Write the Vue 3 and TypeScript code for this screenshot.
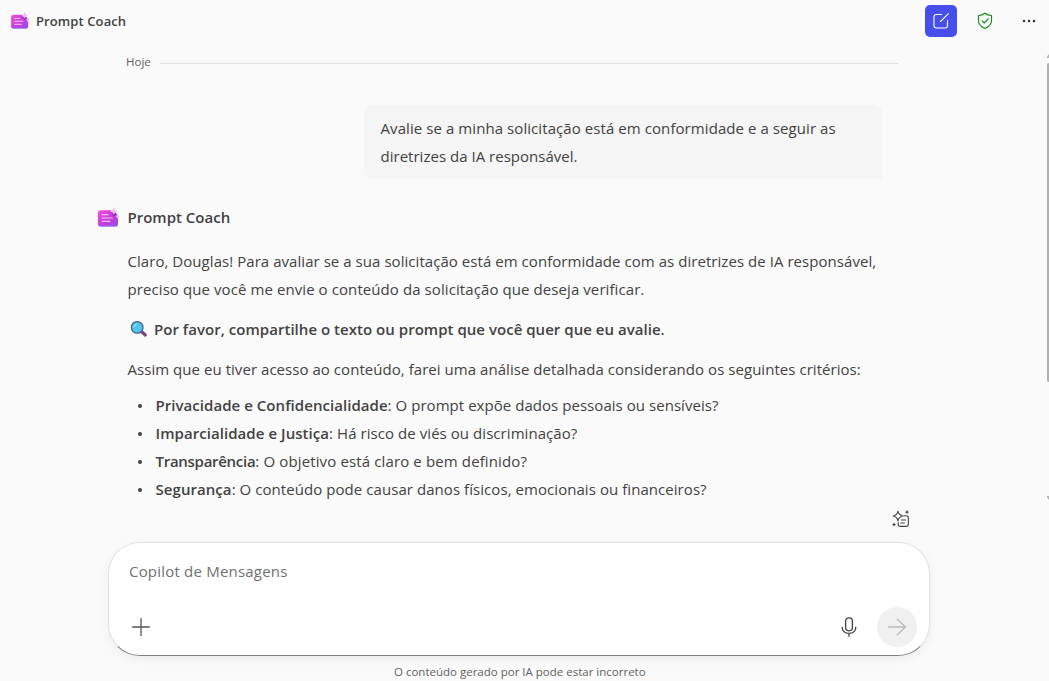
<script setup lang="ts">
interface Criterion {
  title: string
  question: string
  fit: string
}

const criteria: Criterion[] = [
  { title: 'Privacidade e Confidencialidade', question: 'O prompt expõe dados pessoais ou sensíveis?', fit: 'c1' },
  { title: 'Imparcialidade e Justiça', question: 'Há risco de viés ou discriminação?', fit: 'c2' },
  { title: 'Transparência', question: 'O objetivo está claro e bem definido?', fit: 'c3' },
  { title: 'Segurança', question: 'O conteúdo pode causar danos físicos, emocionais ou financeiros?', fit: 'c4' },
]
</script>

<template>
  <div class="app">
    <svg class="defs" width="0" height="0" aria-hidden="true">
      <defs>
        <linearGradient id="cardFill" x1="0" y1="0" x2="1" y2="1">
          <stop offset="0" stop-color="#f04fd8" />
          <stop offset="0.55" stop-color="#c63bdc" />
          <stop offset="1" stop-color="#9a4be4" />
        </linearGradient>
        <symbol id="coach" viewBox="0 0 22 20">
          <path d="M3 3.3H13L15.5 8.8L20 7V17.2Q20 19.5 17.7 19.5H2.3Q0 19.5 0 17.2V6.3Q0 3.3 3 3.3Z" fill="url(#cardFill)" />
          <path d="M0.7 18.2Q1.2 19.2 2.5 19.2H17.7Q19 19.2 19.5 18.2" fill="none" stroke="#8d8cf0" stroke-width="1" />
          <path d="M13.2 4.6L15.6 9.4L18.8 7.2L17 5Z" fill="#7a22a6" />
          <path d="M15.8 0L17 3L19.4 4.4L17.2 5.6L15.9 8L14.5 5.6L12.2 4.4L14.6 3Z" fill="#f0b9ef" />
          <path d="M19.6 6.3L20.4 8.5L22 9.3L20.4 10.1L19.6 12L18.8 10.1L17.2 9.3L18.8 8.5Z" fill="#ecc0f6" />
          <path d="M4.3 7.7H10M4.3 11H14M4.3 14.3H12" stroke="#f8c5f5" stroke-width="1.2" stroke-linecap="round" />
        </symbol>
      </defs>
    </svg>

    <header class="topbar">
      <svg class="logo-small"><use href="#coach" /></svg>
      <span class="app-name">Prompt Coach</span>
      <button class="new-chat" aria-label="Novo chat">
        <svg width="16" height="16" viewBox="0 0 16 16" fill="none" stroke="#fff" stroke-width="1.1" stroke-linecap="round" stroke-linejoin="round">
          <path d="M8.5 1.5H3.5Q1 1.5 1 4V12.5Q1 15 3.5 15H12Q14.5 15 14.5 12.5V7.5M15.4 .6L7.5 8.5" />
        </svg>
      </button>
      <svg class="shield" width="16" height="18" viewBox="0 0 16 18" fill="none" stroke="#16891a" stroke-width="1.15" stroke-linecap="round" stroke-linejoin="round">
        <path d="M8 1.2Q10.7 3.2 14.5 3.5V8.5Q14.5 13.8 8 16.5Q1.5 13.8 1.5 8.5V3.5Q5.3 3.2 8 1.2ZM5.1 8.8L7.3 11L11.3 6.8" />
      </svg>
      <svg class="more" width="14" height="4" viewBox="0 0 14 4" fill="#333">
        <circle cx="2" cy="2" r="1.25" /><circle cx="7" cy="2" r="1.25" /><circle cx="12" cy="2" r="1.25" />
      </svg>
    </header>

    <main class="thread">
      <div class="day"><span class="day-label">Hoje</span><i class="rule"></i></div>
      <div class="bubble">
        <div><span class="b1">Avalie se a minha solicitação está em conformidade e a seguir as</span></div>
        <div><span class="b2">diretrizes da IA responsável.</span></div>
      </div>

      <div class="author">
        <svg class="logo"><use href="#coach" /></svg>
        <span class="author-name">Prompt Coach</span>
      </div>

      <div class="answer">
        <p>
          <span class="a1">Claro, Douglas! Para avaliar se a sua solicitação está em conformidade com as diretrizes de IA responsável,</span><br>
          <span class="a2">preciso que você me envie o conteúdo da solicitação que deseja verificar.</span>
        </p>
        <p class="ask">
          <svg class="lens" width="18" height="18" viewBox="0 0 18 18">
            <path d="M10.8 11L15.3 15" stroke="#7b4380" stroke-width="3.2" stroke-linecap="round" />
            <circle cx="7.2" cy="7.4" r="5.8" fill="#52c5ee" stroke="#45648f" stroke-width="1.3" />
            <path d="M4 6.6Q4.6 4.3 6.8 4" fill="none" stroke="#a8e6fa" stroke-width="1.2" stroke-linecap="round" />
          </svg>
          <strong class="a3">Por favor, compartilhe o texto ou prompt que você quer que eu avalie.</strong>
        </p>
        <p><span class="a4">Assim que eu tiver acesso ao conteúdo, farei uma análise detalhada considerando os seguintes critérios:</span></p>
        <ul>
          <li v-for="c in criteria" :key="c.title">
            <span :class="c.fit"><strong>{{ c.title }}</strong>: {{ c.question }}</span>
          </li>
        </ul>
      </div>
    </main>

    <div class="prompt-tools">
      <svg width="18" height="18" viewBox="0 0 18 18" fill="none" stroke="#424242" stroke-width="1.1" stroke-linecap="round" stroke-linejoin="round">
        <path d="M6 1.2Q6.8 5.2 10.8 6Q6.8 6.8 6 10.8Q5.2 6.8 1.2 6Q5.2 5.2 6 1.2Z" />
        <path d="M11.8 5.8H14Q16.4 5.8 16.4 8.2V14Q16.4 16.4 14 16.4H8.6Q6.2 16.4 6.2 14V12.5M9.4 10H13.6M8.8 13H12.4M15 .9V3.3M13.8 2.1H16.2M2 13.4V15.8M.8 14.6H3.2" />
      </svg>
    </div>

    <section class="composer">
      <div class="placeholder"><span>Copilot de Mensagens</span></div>
      <div class="actions">
        <svg class="plus" width="18" height="18" viewBox="0 0 18 18" stroke="#555" stroke-width="1.3" stroke-linecap="round">
          <path d="M9 .6V17.4M.6 9H17.4" />
        </svg>
        <svg class="mic" width="16" height="20" viewBox="0 0 16 20" fill="none" stroke="#424242" stroke-width="1.3" stroke-linecap="round">
          <rect x="4.6" y=".8" width="6.8" height="13" rx="3.2" />
          <path d="M1.2 10.2Q1.5 16.3 8 16.3Q14.5 16.3 14.8 10.2M8 16.3V19.3" />
        </svg>
        <button class="send" aria-label="Enviar">
          <svg width="20" height="18" viewBox="0 0 20 18" fill="none" stroke="#bdbdbd" stroke-width="1.4" stroke-linecap="round" stroke-linejoin="round">
            <path d="M1.5 9H18.5M10.3 1.2L18.5 9L10.3 16.8" />
          </svg>
        </button>
      </div>
    </section>

    <footer class="note"><span>O conteúdo gerado por IA pode estar incorreto</span></footer>

    <div class="scrollbar"><i class="up"></i><i class="thumb"></i><i class="down"></i></div>
  </div>
</template>

<style>
body { background: #fafafa; overflow: hidden; }
</style>

<style scoped>
.app {
  position: relative;
  display: flex;
  flex-direction: column;
  width: 1049px;
  height: 681px;
  overflow: hidden;
  background: #fafafa;
  color: #424242;
  font-family: "Open Sans", "Noto Sans", sans-serif;
  font-size: 15px;
  line-height: 28px;
  white-space: nowrap;
}
.defs { position: absolute; }
svg { display: block; flex: none; }
button { border: 0; padding: 0; display: flex; align-items: center; justify-content: center; }
strong { font-weight: 600; }
.topbar { display: flex; align-items: center; height: 42px; padding: 0 13px 0 11px; box-sizing: border-box; flex: none; }
.logo-small { width: 19px; height: 17px; margin-top: -1px; }
.app-name { margin-left: 6px; font-size: 13px; font-weight: 600; letter-spacing: .1px; }
.new-chat { width: 32px; height: 32px; border-radius: 5px; background: #464feb; margin-left: auto; }
.shield { margin: 0 29px 0 20px; }
.thread { display: flex; flex-direction: column; height: 463px; flex: none; }
.day { display: flex; align-items: center; margin: 10px 0 0 126px; width: 772px; height: 20px; font-size: 11.5px; }
.day-label { width: 34px; color: #616161; }
.rule { flex: 1; height: 1px; background: #e0e0e0; margin-top: 3px; }
.bubble { box-sizing: border-box; width: 518px; height: 74px; margin: 33px 0 0 364px; padding: 9px 16.5px; background: #f5f5f5; border-radius: 8px 8px 2px 8px; }
.b1 { letter-spacing: .075px; }
.b2 { letter-spacing: .02px; }
.author { display: flex; align-items: center; margin: 24px 0 0 98px; height: 28px; }
.logo { width: 22px; height: 20px; }
.author-name { margin-left: 7.5px; font-weight: 600; }
.answer { margin: 16px 0 0 127.5px; }
.a1 { letter-spacing: .05px; }
.a2 { letter-spacing: .085px; }
.a3 { letter-spacing: .03px; }
.a4 { letter-spacing: .045px; }
.c1 { letter-spacing: .045px; }
.c2 { letter-spacing: .06px; }
.c3 { letter-spacing: .13px; }
.c3 strong { letter-spacing: -.28px; }
.c4 { letter-spacing: .06px; }
p { margin: 0 0 12px; }
.ask { display: flex; align-items: center; }
.lens { margin: 0 6.5px 0 2px; }
ul { list-style: none; margin: -4px 0 0; padding: 0; }
li { display: flex; align-items: center; height: 28px; }
li::before { content: ""; width: 4px; height: 4px; border-radius: 50%; background: #424242; margin: 1px 14px 0 10px; }
.prompt-tools { display: flex; height: 37px; margin-left: 892px; align-items: flex-start; padding-top: 5px; box-sizing: border-box; flex: none; }
.composer {
  box-sizing: border-box;
  width: 822px;
  height: 114px;
  margin-left: 108px;
  flex: none;
  border: 1px solid #e3e3e3;
  border-bottom-color: #808080;
  border-radius: 32px;
  background: #fff;
  box-shadow: 0 3px 9px rgba(60, 70, 110, .07);
}
.placeholder { margin: 14px 0 0 20px; color: #707070; height: 28px; letter-spacing: .2px; }
.actions { display: flex; align-items: center; height: 40px; margin: 22px 12px 0 23px; }
.mic { margin: 0 20px 0 auto; }
.send { width: 40px; height: 40px; border-radius: 50%; background: #f0f0f0; }
.note { font-size: 11.5px; color: #616161; margin: 7px 0 0 394px; line-height: 18px; }
.scrollbar { position: absolute; top: 54px; right: 0; width: 2px; height: 446px; display: flex; flex-direction: column; }
.up { height: 4px; background: #b5b5b5; clip-path: polygon(100% 0, 100% 100%, 0 100%, 0 60%); }
.thumb { height: 319px; margin-top: 5px; background: #b0b0b0; border-radius: 2px 0 0 2px; }
.down { height: 4px; margin-top: auto; background: #b5b5b5; clip-path: polygon(0 0, 100% 0, 100% 100%, 0 40%); }
</style>
